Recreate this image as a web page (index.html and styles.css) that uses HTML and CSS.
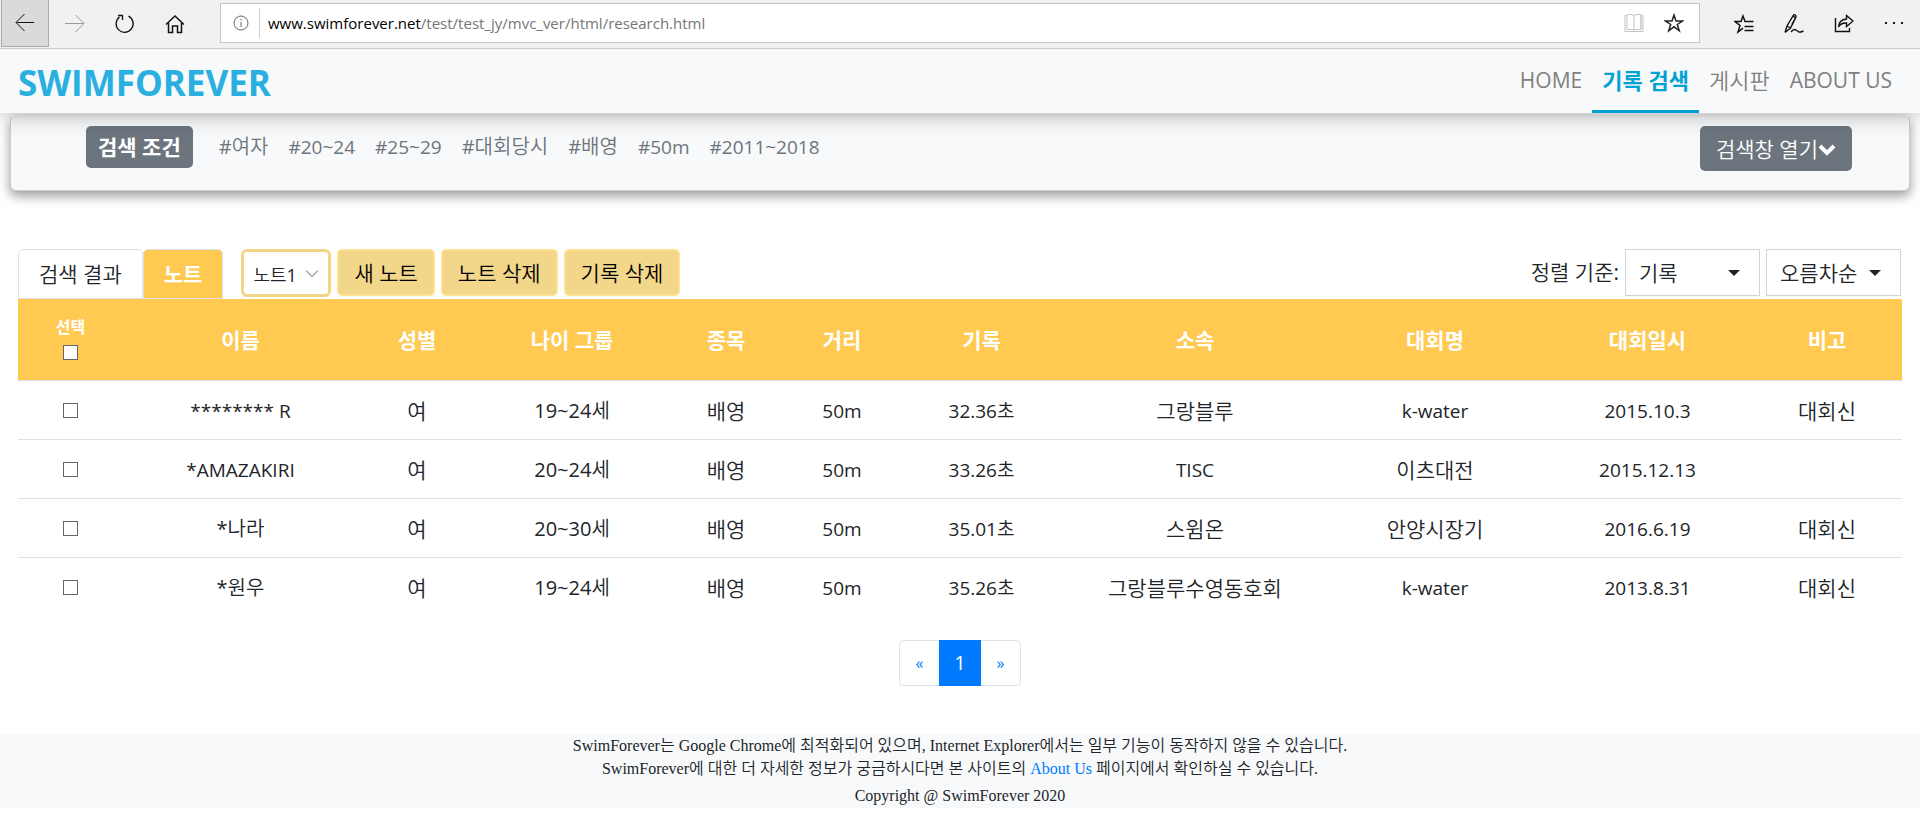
FILE: index.html
```html
<!DOCTYPE html>
<html lang="ko">
<head>
<meta charset="utf-8">
<title>SWIMFOREVER</title>
<meta name="viewport" content="width=device-width, initial-scale=1">
<link rel="stylesheet" href="styles.css">
</head>
<body>
<div class="browser">
  <button class="tool tool-back" aria-label="뒤로"><svg width="20" height="20" viewBox="0 0 20 20"><path d="M19 9.500H1.500M9.500 1L1 9.500L9.500 18"/></svg></button>
  <button class="tool tool-off" aria-label="앞으로"><svg width="20" height="20" viewBox="0 0 20 20"><path d="M0 9.500H18.500M10.500 1L19 9.500L10.500 18"/></svg></button>
  <button class="tool" aria-label="새로 고침"><svg width="20" height="20" viewBox="0 0 20 20"><path d="M13.500 2.200A8.500 8.500 0 1 1 4.500 3M3 1.500H7.500V6" stroke-width="1.300"/></svg></button>
  <button class="tool" aria-label="홈"><svg width="20" height="20" viewBox="0 0 20 20"><path d="M1 10.500L10 2L19 10.500M3.500 9V18.500H7.500V12H12.500V18.500H16.500V9" stroke-width="1.500"/></svg></button>
  <div class="address">
    <svg class="info" width="16" height="16" viewBox="0 0 16 16"><circle cx="8" cy="8" r="7"/><path d="M8 7V12M8 4V5.500"/></svg>
    <span class="url"><b>www.swimforever.net</b>/test/test_jy/mvc_ver/html/research.html</span>
    <svg class="book" width="20" height="20" viewBox="0 0 20 20"><path d="M1 2.500H3V16.500H9L10 17.500L11 16.500H17V2.500H19V18.500H1ZM3 1.500H8L10 3L12 1.500H17V16.500M10 3V17.500"/></svg>
    <svg width="20" height="20" viewBox="0 0 20 20"><path d="M10 2L12 8H18.500L13.300 11.500L15.300 17.800L10 13.800L4.700 17.800L6.700 11.500L1.500 8H8Z" stroke-width="1.500"/></svg>
  </div>
  <button class="tool" aria-label="허브"><svg width="20" height="20" viewBox="0 0 20 20"><path d="M19.500 7.500H11L9 2L7 7.500H1L6 11.500L4 18L9 14.200M10.500 12.500H19.500M10.500 16.500H19.500" stroke-width="1.500"/></svg></button>
  <button class="tool" aria-label="메모 추가"><svg width="20" height="20" viewBox="0 0 20 20"><path d="M1 18.500L3 12L9.500 1Q12 0 12 3L6.500 14L1 18.500M3 12L6.500 14M9 2L11.500 4L8 10M7 18Q10 14.500 12 16T15 18T19.500 17" stroke-width="1.400"/></svg></button>
  <button class="tool" aria-label="공유"><svg width="20" height="20" viewBox="0 0 20 20"><path d="M1.500 4V17.500H15.500V14M4.500 13Q5 5.500 12.500 5V1.500L19 7L12.500 12.500V9Q7 8.500 4.500 13Z" stroke-width="1.400"/></svg></button>
  <button class="tool" aria-label="기타"><svg width="20" height="20" viewBox="0 0 20 20"><path d="M1 9H3M9 9H11M17 9H19" stroke-width="2"/></svg></button>
</div>

<nav class="navbar">
  <a class="brand" href="#">SWIMFOREVER</a>
  <div class="menu">
    <a href="#">HOME</a>
    <a class="current" href="#">기록 검색</a>
    <a class="board" href="#">게시판</a>
    <a href="#">ABOUT US</a>
  </div>
</nav>

<section class="search">
  <span class="badge">검색 조건</span>
  <ul class="tags">
    <li class="ko">#여자</li><li>#20~24</li><li>#25~29</li><li class="ko">#대회당시</li><li class="ko">#배영</li><li>#50m</li><li>#2011~2018</li>
  </ul>
  <button class="open">검색창 열기<svg width="18" height="18" viewBox="0 0 18 18"><path d="M2 6L9 13L16 6"/></svg></button>
</section>

<main class="content">
  <div class="controls">
    <div class="tabs">
      <button class="tab">검색 결과</button>
      <button class="tab active">노트</button>
    </div>
    <div class="picker note-picker">
      <select aria-label="노트 선택"><option>노트1</option></select>
      <svg width="14" height="14" viewBox="0 0 14 14"><path d="M1 4.500L7 10.500L13 4.500"/></svg>
    </div>
    <button class="action">새 노트</button>
    <button class="action">노트 삭제</button>
    <button class="action">기록 삭제</button>
    <label class="sort-label" for="sort">정렬 기준:</label>
    <div class="picker sort-picker">
      <select id="sort"><option>기록</option></select>
      <svg width="12" height="6" viewBox="0 0 12 6"><path d="M0 0H12L6 6Z"/></svg>
    </div>
    <div class="picker sort-picker">
      <select aria-label="정렬 순서"><option>오름차순</option></select>
      <svg width="12" height="6" viewBox="0 0 12 6"><path d="M0 0H12L6 6Z"/></svg>
    </div>
  </div>

  <table class="records">
    <colgroup><col class="c-check"><col class="c-name"><col class="c-sex"><col class="c-age"><col class="c-short"><col class="c-short"><col class="c-time"><col class="c-team"><col class="c-meet"><col class="c-date"><col class="c-note"></colgroup>
    <thead>
      <tr><th class="check-cell"><label class="check-all">선택<input type="checkbox"></label></th><th>이름</th><th>성별</th><th>나이 그룹</th><th>종목</th><th>거리</th><th>기록</th><th>소속</th><th>대회명</th><th>대회일시</th><th>비고</th></tr>
    </thead>
    <tbody>
      <tr><td><input type="checkbox" aria-label="R 선택"></td><td class="en">******** R</td><td class="ko">여</td><td>19~24세</td><td class="ko">배영</td><td class="en">50m</td><td class="en">32.36초</td><td class="ko">그랑블루</td><td class="en">k-water</td><td class="en">2015.10.3</td><td class="ko">대회신</td></tr>
      <tr><td><input type="checkbox" aria-label="AMAZAKIRI 선택"></td><td class="en">*AMAZAKIRI</td><td class="ko">여</td><td>20~24세</td><td class="ko">배영</td><td class="en">50m</td><td class="en">33.26초</td><td class="en">TISC</td><td class="ko">이츠대전</td><td class="en">2015.12.13</td><td></td></tr>
      <tr><td><input type="checkbox" aria-label="나라 선택"></td><td>*나라</td><td class="ko">여</td><td>20~30세</td><td class="ko">배영</td><td class="en">50m</td><td class="en">35.01초</td><td class="ko">스윔온</td><td class="ko">안양시장기</td><td class="en">2016.6.19</td><td class="ko">대회신</td></tr>
      <tr><td><input type="checkbox" aria-label="원우 선택"></td><td>*원우</td><td class="ko">여</td><td>19~24세</td><td class="ko">배영</td><td class="en">50m</td><td class="en">35.26초</td><td class="ko">그랑블루수영동호회</td><td class="en">k-water</td><td class="en">2013.8.31</td><td class="ko">대회신</td></tr>
    </tbody>
  </table>

  <div class="pages">
    <a href="#" aria-label="이전">«</a>
    <a class="active" href="#">1</a>
    <a href="#" aria-label="다음">»</a>
  </div>
</main>

<footer class="footer">
  <p>SwimForever는 Google Chrome에 최적화되어 있으며, Internet Explorer에서는 일부 기능이 동작하지 않을 수 있습니다.</p>
  <p>SwimForever에 대한 더 자세한 정보가 궁금하시다면 본 사이트의 <a href="#">About Us</a> 페이지에서 확인하실 수 있습니다.</p>
  <p class="copyright">Copyright @ SwimForever 2020</p>
</footer>
</body>
</html>
```

FILE: styles.css
```css
* { box-sizing: border-box; }

body {
  margin: 0;
  background: #fff;
  color: #212529;
  font: 20px/30px "Open Sans", "Noto Sans CJK KR DemiLight", "Noto Sans CJK KR Light", "Noto Sans CJK KR", sans-serif;
}

button, select, input { font: inherit; color: inherit; }
button { cursor: pointer; }
a { text-decoration: none; }

/* Browser toolbar */
.browser {
  display: flex;
  align-items: flex-start;
  height: 49px;
  padding: 0 1px;
  background: #f1f1f1;
  border-bottom: 1px solid #ccc;
}
.browser svg { fill: none; stroke: currentColor; flex: none; }
.tool {
  display: flex;
  align-items: center;
  justify-content: center;
  width: 50px;
  height: 47px;
  padding: 0;
  border: 0;
  background: none;
  color: #111;
}
.tool-back { width: 48px; margin-right: 1px; background: #dadada; border: 1px solid #aaa; border-top: 0; }
.tool-off { color: #999; }
.address {
  flex: 1;
  display: flex;
  align-items: center;
  height: 40px;
  margin: 3px 19px 0 20px;
  padding: 0 15px 0 12px;
  background: #fff;
  border: 1px solid #c4c4c4;
}
.info { color: #666; }
.url {
  flex: 1;
  margin-left: 10px;
  padding-left: 8px;
  border-left: 1px solid #ccc;
  font-size: 15px;
  color: #767676;
}
.url b { font-weight: 400; color: #000; }
.book { color: #c4c4c4; margin-right: 20px; }

/* Site navigation */
.navbar {
  position: relative;
  z-index: 1;
  display: flex;
  justify-content: space-between;
  height: 64px;
  padding: 0 18px;
  background: #f8f9fa;
  box-shadow: 0 4px 20px rgba(0, 0, 0, .24);
  clip-path: inset(0 0 -40px 0);
}
.brand { font-size: 35px; line-height: 68px; font-weight: 700; color: #29b0e0; }
.menu { display: flex; }
.menu a { padding: 0 10px; line-height: 62px; font-size: 21px; color: #808080; }
.menu .current { font-size: 22px; color: #00a2d4; border-bottom: 3px solid #00a2d4; }
.menu .board { font-size: 22px; }
.menu .current, .badge, .tab.active, .records th {
  font-family: "Open Sans", "Noto Sans CJK KR", sans-serif;
  font-weight: 700;
}

/* Search summary */
.search {
  display: flex;
  align-items: flex-start;
  height: 75px;
  margin: 3px 10px 0;
  padding: 9px 57px 0 75px;
  background: #f8f9fa;
  border: 1px solid #ccc;
  border-top-color: #eee;
  border-radius: 6px;
  box-shadow: 0 5px 12px rgba(0, 0, 0, .4);
}
.badge {
  padding: 0 12px;
  border-radius: 5px;
  background: #6c757d;
  color: #fff;
  font-size: 21px;
  line-height: 42px;
}
.tags { display: flex; gap: 20px; margin: 0 0 0 26px; padding: 0; list-style: none; font-size: 19px; line-height: 42px; color: #6c757d; }
.tags .ko { font-size: 20px; }
.open {
  display: flex;
  align-items: center;
  height: 45px;
  margin-left: auto;
  padding: 0 16px;
  border: 0;
  border-radius: 5px;
  background: #6c757d;
  color: #fff;
  font-size: 21px;
}
.open svg { fill: none; stroke: currentColor; stroke-width: 4; }

/* Tabs and list controls */
.content { padding: 58px 18px 0; }
.controls { display: flex; align-items: flex-start; gap: 6px; height: 50px; font-size: 21px; }
.tabs { display: flex; margin-right: 12px; }
.tab {
  height: 50px;
  padding: 0 20px;
  border: 1px solid #dee2e6;
  border-radius: 5px 5px 0 0;
  background: #fff;
}
.tab.active { background: #ffc952; color: #fff; }
.picker { position: relative; }
.picker select { appearance: none; width: 100%; height: 100%; background: #fff; }
.picker svg { position: absolute; top: 50%; transform: translateY(-50%); pointer-events: none; }
.note-picker { width: 90px; height: 48px; }
.note-picker select { padding: 3px 9px 0; border: 3px solid #f2d685; border-radius: 6px; font-size: 18px; }
.note-picker svg { right: 12px; fill: none; stroke: #555; }
.action {
  height: 47px;
  padding: 0 15px;
  border: 2px solid #ffe291;
  border-radius: 5px;
  background: #f2d68a;
  color: #000;
}
.sort-label { margin-left: auto; line-height: 46px; }
.sort-picker { width: 135px; height: 47px; }
.sort-picker + .sort-picker { margin-right: 1px; }
.sort-picker select { padding: 0 13px; border: 1px solid #ced4da; border-radius: 0; }
.sort-picker svg { right: 20px; fill: #222; }

/* Records */
.records { width: 100%; table-layout: fixed; border-collapse: collapse; text-align: center; }
.c-check { width: 105px; }
.c-name { width: 235px; }
.c-sex { width: 118px; }
.c-age { width: 192px; }
.c-short { width: 116px; }
.c-time { width: 163px; }
.c-team { width: 264px; }
.c-meet { width: 216px; }
.c-date { width: 209px; }
.c-note { width: 150px; }
.records th { height: 81px; padding: 1px 0 0; background: #ffc952; color: #fff; font-size: 21px; }
.records .check-cell { padding: 0 0 4px; }
.records td { height: 59px; padding: 2px 0 0; border-top: 1px solid #dee2e6; }
.records .ko { font-size: 21px; }
.records .en { font-size: 19px; }
.records input {
  appearance: none;
  display: block;
  width: 15px;
  height: 15px;
  margin: 0 auto;
  border: 1px solid #666;
  background: #fff;
}
.check-all { display: block; font-size: 16px; line-height: 24px; }
.records .check-all input { margin-top: 6px; }

/* Pagination */
.pages { display: flex; justify-content: center; margin-top: 24px; line-height: 44px; }
.pages a {
  width: 40px;
  border: 1px solid #dee2e6;
  text-align: center;
  font-size: 16px;
  color: #007bff;
}
.pages a:first-child { border-right: 0; border-radius: 5px 0 0 5px; }
.pages a:last-child { border-left: 0; border-radius: 0 5px 5px 0; }
.pages .active { width: 42px; background: #007bff; border-color: #007bff; color: #fff; font-size: 20px; }

/* Footer */
.footer {
  margin-top: 48px;
  padding-bottom: 1px;
  background: #f8f9fa;
  text-align: center;
  font: 16px/23px "Liberation Serif", "Noto Sans CJK KR DemiLight", "Noto Sans CJK KR", serif;
}
.footer p { margin: 0; }
.footer a { color: #007bff; }
.footer .copyright { margin-top: 4px; }
```
